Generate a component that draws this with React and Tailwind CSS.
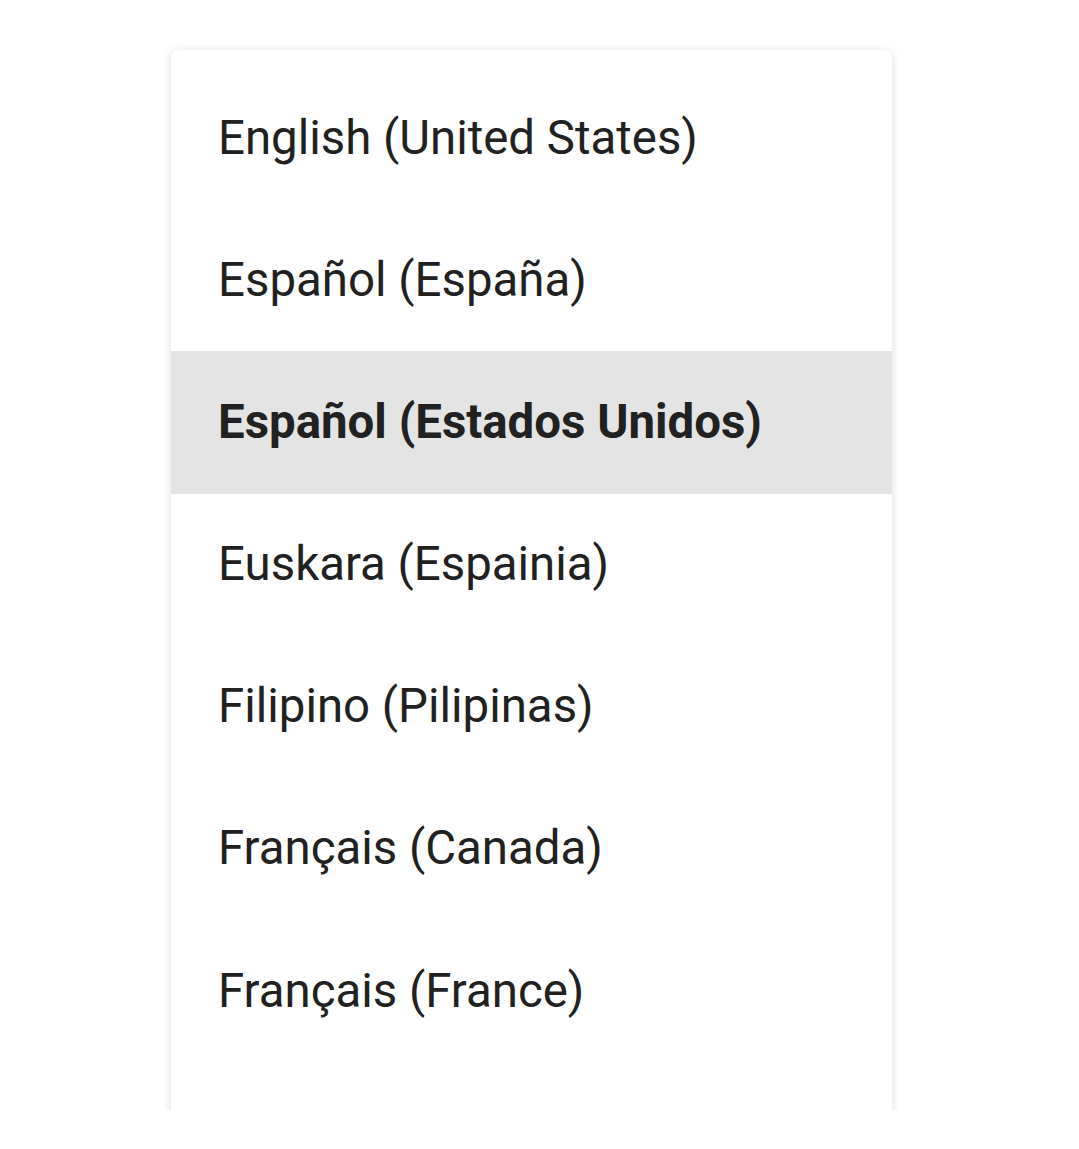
import React from "react";

const items = [
  "English (United States)",
  "Español (España)",
  "Español (Estados Unidos)",
  "Euskara (Espainia)",
  "Filipino (Pilipinas)",
  "Français (Canada)",
  "Français (France)",
];

export default function App() {
  return (
    <div className="w-[1079px] h-[1149px] bg-white" style={{ fontFamily: "Roboto, 'Noto Sans', sans-serif" }}>
      <div className="h-[1110px] overflow-hidden pt-[50px] pl-[171px]">
        <div className="w-[721px] h-[1100px] bg-white rounded-[8px] shadow-[0_1px_10px_rgba(0,0,0,0.14)] pt-[17px] overflow-hidden">
          {items.map((t, i) => (
            <div
              key={t}
              className={`h-[142.2px] flex items-center pl-[47px] text-[47.4px] text-[#212121] ${i === 2 ? "bg-[#e4e4e4] font-bold" : ""}`}
            >
              {t}
            </div>
          ))}
        </div>
      </div>
    </div>
  );
}
